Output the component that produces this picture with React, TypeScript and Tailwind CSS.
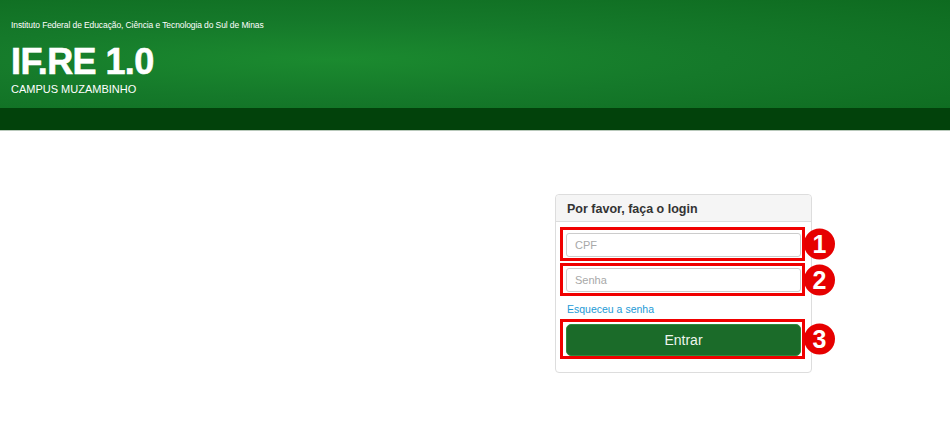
import React from "react";

function Marker({ n }: { n: number }) {
  return (
    <span className="absolute -right-[33px] top-1/2 flex h-[31px] w-[31px] -translate-y-1/2 items-center justify-center rounded-full bg-[#e60000] text-[25px] font-bold leading-none text-white">
      {n}
    </span>
  );
}

function Highlight({
  n,
  className,
  children,
}: {
  n: number;
  className?: string;
  children: React.ReactNode;
}) {
  return (
    <div
      className={`relative w-[245px] border-[3px] border-[#f00000] pl-[3px] pr-[1px] ${className ?? ""}`}
    >
      {children}
      <Marker n={n} />
    </div>
  );
}

export default function App() {
  return (
    <div className="min-h-[432px] bg-white font-['Liberation_Sans',Arial,sans-serif]">
      <header>
        <div className="h-[108px] bg-[radial-gradient(ellipse_at_35%_55%,#1b8a2f_0%,#15792a_45%,#0e6b20_100%)] px-[11px] pt-[19px] text-white">
          <p className="text-[8.5px] leading-[12px] tracking-[-0.1px]">
            Instituto Federal de Educação, Ciência e Tecnologia do Sul de Minas
          </p>
          <h1 className="mt-[14px] text-[36px] font-bold leading-[34px] tracking-[-0.6px] [-webkit-text-stroke:0.6px_white]">
            IF.RE 1.0
          </h1>
          <p className="mt-[4px] text-[11px] leading-[13px]">CAMPUS MUZAMBINHO</p>
        </div>
        <div className="h-[22px] bg-[#02420b]" />
        <div className="h-px bg-[#b9c9bb]" />
      </header>

      <main className="pl-[555px] pt-[63px]">
        <div className="w-[257px] rounded-[4px] border border-[#dddddd] bg-white pb-[13px]">
          <div className="h-[27px] rounded-t-[4px] border-b border-[#dddddd] bg-[#f5f5f5] pl-[11px] pt-[7px] text-[12.5px] font-bold leading-[14px] text-[#333333]">
            Por favor, faça o login
          </div>
          <div className="pl-[4px] pt-[5px]">
            <Highlight n={1} className="pt-[3px] pb-[1px]">
              <input
                placeholder="CPF"
                className="block h-[24px] w-full rounded-[3px] border border-[#cccccc] bg-white px-[8px] text-[11px] text-[#555555] outline-none placeholder:text-[#a8a8a8]"
              />
            </Highlight>
            <Highlight n={2} className="mt-[2px] pt-[2px] pb-[1px]">
              <input
                placeholder="Senha"
                type="password"
                className="block h-[24px] w-full rounded-[3px] border border-[#cccccc] bg-white px-[8px] text-[11px] text-[#555555] outline-none placeholder:text-[#a8a8a8]"
              />
            </Highlight>
            <a
              href="#"
              className="mt-[6px] mb-[3px] block pl-[7px] text-[10.5px] leading-[14px] text-[#1e9ad6]"
            >
              Esqueceu a senha
            </a>
            <Highlight n={3} className="pt-[2px] pb-[0px]">
              <button className="block h-[32px] w-full rounded-[5px] border border-[#2f8a3c] bg-[#1b6b29] text-[14px] text-[#eef5ee]">
                Entrar
              </button>
            </Highlight>
          </div>
        </div>
      </main>
    </div>
  );
}
